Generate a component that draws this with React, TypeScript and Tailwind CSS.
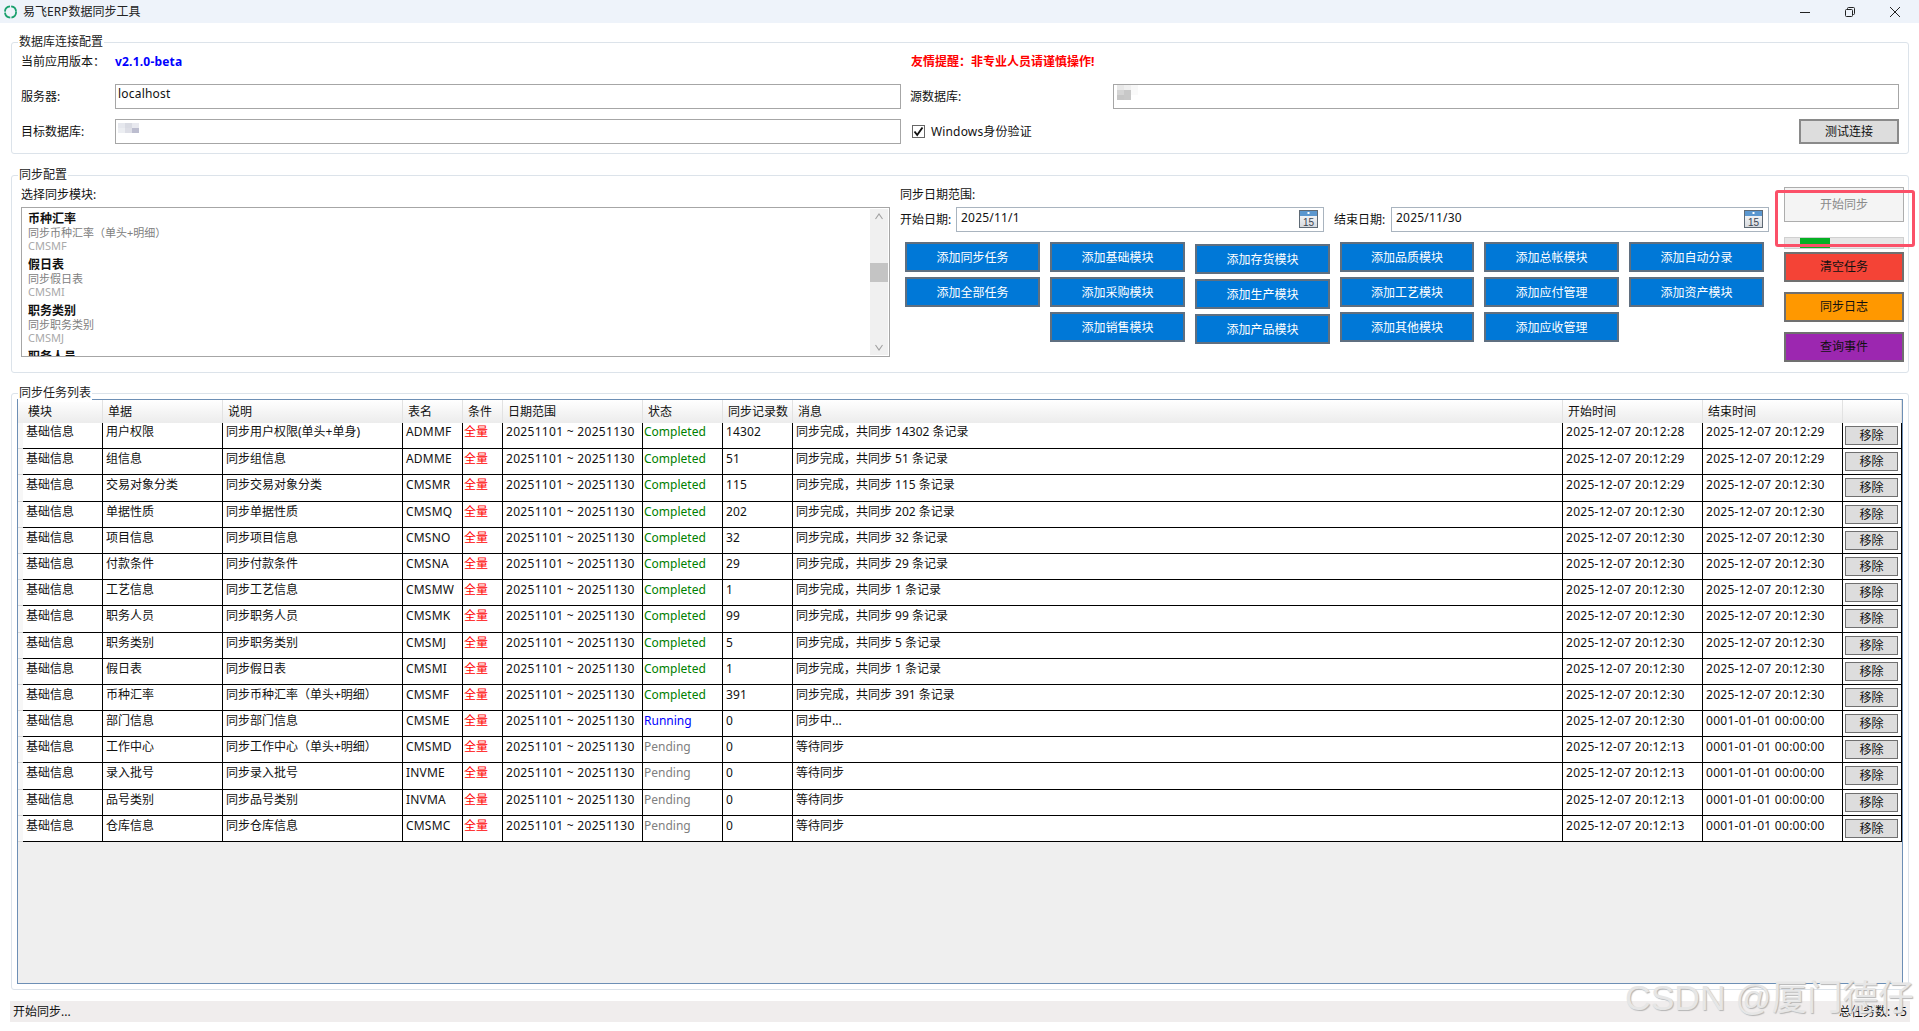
import React from 'react';

const font = "font-['Noto_Sans','Noto_Sans_CJK_SC',sans-serif]";

type Task = {
  bill: string;
  desc: string;
  table: string;
  status: string;
  count: string;
  msg: string;
  start: string;
  end: string;
};

const done = (bill: string, desc: string, table: string, count: string, start: string, end: string): Task => ({
  bill,
  desc,
  table,
  status: 'Completed',
  count,
  msg: `同步完成，共同步 ${count} 条记录`,
  start: `2025-12-07 20:12:${start}`,
  end: `2025-12-07 20:12:${end}`,
});

const pending = (bill: string, desc: string, table: string): Task => ({
  bill,
  desc,
  table,
  status: 'Pending',
  count: '0',
  msg: '等待同步',
  start: '2025-12-07 20:12:13',
  end: '0001-01-01 00:00:00',
});

const tasks: Task[] = [
  done('用户权限', '同步用户权限(单头+单身)', 'ADMMF', '14302', '28', '29'),
  done('组信息', '同步组信息', 'ADMME', '51', '29', '29'),
  done('交易对象分类', '同步交易对象分类', 'CMSMR', '115', '29', '30'),
  done('单据性质', '同步单据性质', 'CMSMQ', '202', '30', '30'),
  done('项目信息', '同步项目信息', 'CMSNO', '32', '30', '30'),
  done('付款条件', '同步付款条件', 'CMSNA', '29', '30', '30'),
  done('工艺信息', '同步工艺信息', 'CMSMW', '1', '30', '30'),
  done('职务人员', '同步职务人员', 'CMSMK', '99', '30', '30'),
  done('职务类别', '同步职务类别', 'CMSMJ', '5', '30', '30'),
  done('假日表', '同步假日表', 'CMSMI', '1', '30', '30'),
  done('币种汇率', '同步币种汇率（单头+明细）', 'CMSMF', '391', '30', '30'),
  {
    bill: '部门信息',
    desc: '同步部门信息',
    table: 'CMSME',
    status: 'Running',
    count: '0',
    msg: '同步中...',
    start: '2025-12-07 20:12:30',
    end: '0001-01-01 00:00:00',
  },
  pending('工作中心', '同步工作中心（单头+明细）', 'CMSMD'),
  pending('录入批号', '同步录入批号', 'INVME'),
  pending('品号类别', '同步品号类别', 'INVMA'),
  pending('仓库信息', '同步仓库信息', 'CMSMC'),
];

const modules = [
  { name: '币种汇率', desc: '同步币种汇率（单头+明细）', code: 'CMSMF' },
  { name: '假日表', desc: '同步假日表', code: 'CMSMI' },
  { name: '职务类别', desc: '同步职务类别', code: 'CMSMJ' },
];

const statusColor: Record<string, string> = {
  Completed: 'text-[#008000]',
  Running: 'text-[#0000ff]',
  Pending: 'text-[#808080]',
};

const headers = [
  { label: '模块', cls: 'w-[80px]' },
  { label: '单据', cls: 'w-[120px]' },
  { label: '说明', cls: 'w-[180px]' },
  { label: '表名', cls: 'w-[60px]' },
  { label: '条件', cls: 'w-[40px]' },
  { label: '日期范围', cls: 'w-[140px]' },
  { label: '状态', cls: 'w-[80px]' },
  { label: '同步记录数', cls: 'w-[70px]' },
  { label: '消息', cls: 'w-[770px]' },
  { label: '开始时间', cls: 'w-[140px]' },
  { label: '结束时间', cls: 'w-[140px]' },
  { label: '', cls: 'w-[59px]' },
];

// per-column tweaks for the task rows (latin columns run a bit wider in the original font)
const cellTweak = [
  'pl-[3px]',
  'pl-[3px]',
  'pl-[3px]',
  'pl-[3px] tracking-[0.2px]',
  'pl-[1px]',
  'pl-[3px] tracking-[0.3px]',
  'pl-[1px]',
  'pl-[3px] tracking-[0.15px]',
  'pl-[3px]',
  'pl-[3px] tracking-[0.28px]',
  'pl-[3px] tracking-[0.28px]',
];

const buttonCols = [
  { cls: '', width: 'w-[135px]', items: ['添加同步任务', '添加全部任务'] },
  { cls: '', width: 'w-[135px]', items: ['添加基础模块', '添加采购模块', '添加销售模块'] },
  { cls: 'mt-[2px]', width: 'w-[135px]', items: ['添加存货模块', '添加生产模块', '添加产品模块'] },
  { cls: '', width: 'w-[134px]', items: ['添加品质模块', '添加工艺模块', '添加其他模块'] },
  { cls: '', width: 'w-[135px]', items: ['添加总帐模块', '添加应付管理', '添加应收管理'] },
  { cls: '', width: 'w-[135px]', items: ['添加自动分录', '添加资产模块'] },
];

const Group: React.FC<{ title: string; className: string; children: React.ReactNode }> = ({ title, className, children }) => (
  <section className={`relative ml-[11px] w-[1898px] rounded-[3px] border border-[#dce3ea] ${className}`}>
    <span className="absolute -top-[10px] left-[6px] bg-white px-[1px] leading-[18px] text-[#222]">{title}</span>
    {children}
  </section>
);

const CalendarIcon = () => (
  <svg width="19" height="18" viewBox="0 0 19 18" className="shrink-0">
    <defs>
      <linearGradient id="calBody" x1="0" y1="0" x2="0" y2="1">
        <stop offset="0" stopColor="#ffffff" />
        <stop offset="1" stopColor="#d5d9de" />
      </linearGradient>
    </defs>
    <rect x="0.5" y="0.5" width="18" height="17" fill="url(#calBody)" stroke="#5f6a75" />
    <rect x="1" y="1" width="17" height="5" fill="#5b97cf" />
    <rect x="8.5" y="2" width="2" height="2" fill="#fff" />
    <text x="9.5" y="15.5" textAnchor="middle" fontSize="10" fontFamily="Liberation Sans" fill="#3b4450">15</text>
  </svg>
);

// the blurred-out database names
const Blur: React.FC<{ rows: string[][] }> = ({ rows }) => (
  <div className="flex flex-col blur-[0.6px]">
    {rows.map((row, r) => (
      <div key={r} className="flex">
        {row.map((c, i) => (
          <div key={i} className="h-[5px] w-[7px]" style={{ background: c }} />
        ))}
      </div>
    ))}
  </div>
);

const DateField: React.FC<{ value: string; className: string }> = ({ value, className }) => (
  <div className={`flex h-[25px] items-start justify-between border border-[#a9b4bf] pl-[4px] pr-[5px] pt-[1px] ${className}`}>
    <span className="leading-[18px] tracking-[0.2px]">{value}</span>
    <div className="pt-[1px]">
      <CalendarIcon />
    </div>
  </div>
);

export default function App() {
  return (
    <div className={`${font} relative flex h-[1031px] w-[1919px] flex-col overflow-hidden bg-white text-[12px] text-[#111]`}>
      {/* title bar */}
      <header className="flex h-[23px] shrink-0 items-center bg-[#eef3fa] pl-[3px]">
        <svg width="15" height="16" viewBox="0 0 15 16" className="shrink-0">
          <circle cx="7.5" cy="8" r="5.6" fill="none" stroke="#1aa06d" strokeWidth="1.8" strokeDasharray="7.6 1.2" />
        </svg>
        <span className="ml-[5px] text-[12px] leading-none text-[#222]">易飞ERP数据同步工具</span>
        <div className="ml-auto mr-[19px] flex items-center gap-[35px]">
          <svg width="10" height="10" viewBox="0 0 10 10" stroke="#222" strokeWidth="1">
            <path d="M0 5.5h10" />
          </svg>
          <svg width="10" height="10" viewBox="0 0 10 10" fill="none" stroke="#222" strokeWidth="1">
            <rect x="0.5" y="2.5" width="7" height="7" rx="1" />
            <path d="M2.5 2.5V1.5a1 1 0 0 1 1-1h5a1 1 0 0 1 1 1v5a1 1 0 0 1-1 1H7.5" />
          </svg>
          <svg width="10" height="10" viewBox="0 0 10 10" stroke="#222" strokeWidth="1">
            <path d="M0 0L10 10M10 0L0 10" />
          </svg>
        </div>
      </header>

      <Group title="数据库连接配置" className="mt-[19px] h-[112px] shrink-0">
        <div className="grid grid-cols-[94px_786px_212px_786px] grid-rows-[23px_25px_25px] items-center gap-y-[10px] pl-[9px] pt-[8px]">
          <span className="self-start leading-[22px]">当前应用版本：</span>
          <span className="self-start font-bold leading-[22px] tracking-[0.2px] text-[#0000ff]">v2.1.0-beta</span>
          <span className="col-span-2 self-start pl-[10px] font-bold leading-[22px] text-[#ff0000]">友情提醒：非专业人员请谨慎操作!</span>

          <span className="pt-[1px]">服务器:</span>
          <div className="h-[25px] border border-[#a6a6a6] pl-[2px] leading-[18px] tracking-[0.2px]">localhost</div>
          <span className="pl-[9px] pt-[1px]">源数据库:</span>
          <div className="h-[25px] border border-[#a6a6a6] pl-[3px]">
            <Blur
              rows={[
                ['#e8e8e8', '#f0f0f0', '#f8f8f8'],
                ['#d4d4d4', '#c8c8c8', '#fafafa'],
                ['#c6c6c6', '#c8c8c8', '#ffffff'],
              ]}
            />
          </div>

          <span>目标数据库:</span>
          <div className="h-[25px] border border-[#a6a6a6] pl-[2px] pt-[3px]">
            <Blur
              rows={[
                ['#e6e8ee', '#d9dbe3', '#e8e9ef'],
                ['#eceef2', '#dddee6', '#bcbdcf'],
              ]}
            />
          </div>
          <label className="flex items-center pl-[11px]">
            <span className="flex h-[13px] w-[13px] items-center justify-center border border-[#666]">
              <svg width="11" height="11" viewBox="0 0 11 11">
                <path d="M1.5 5.5 L4.2 9 L9.5 1.5" fill="none" stroke="#111" strokeWidth="1.9" />
              </svg>
            </span>
            <span className="ml-[6px] tracking-[0.15px]">Windows身份验证</span>
          </label>
          <div className="flex justify-end">
            <button className="h-[25px] w-[100px] border-2 border-[#8a8a8a] bg-[#dddddd]">测试连接</button>
          </div>
        </div>
      </Group>

      <Group title="同步配置" className="mt-[21px] h-[198px] shrink-0">
        <div className="flex pl-[9px] pt-[9px]">
          <div className="w-[869px] shrink-0">
            <div className="h-[22px] leading-[20px]">选择同步模块:</div>
            <div className="flex h-[150px] justify-between overflow-hidden border border-[#a6a6a6] pl-[6px]">
              <div className="pt-[3px]">
                {modules.map((m) => (
                  <div key={m.code} className="h-[46px]">
                    <div className="h-[15px] font-bold leading-[16px]">{m.name}</div>
                    <div className="h-[13px] text-[11px] leading-[14px] text-[#808080]">{m.desc}</div>
                    <div className="h-[13px] text-[11px] leading-[13px] text-[#a9a9a9]">{m.code}</div>
                  </div>
                ))}
                <div className="font-bold leading-[16px]">职务人员</div>
              </div>
              <div className="my-[1px] mr-[1px] flex w-[18px] flex-col items-center justify-between bg-[#f0f0f0]">
                <svg width="10" height="16" viewBox="0 0 10 16" fill="none" stroke="#a0a0a0" strokeWidth="1.1" className="shrink-0">
                  <path d="M1.5 10 L5 5 L8.5 10" />
                </svg>
                <div className="-mt-[20px] h-[19px] w-full bg-[#c4c4c4]" />
                <svg width="10" height="16" viewBox="0 0 10 16" fill="none" stroke="#a0a0a0" strokeWidth="1.1" className="shrink-0">
                  <path d="M1.5 6 L5 11 L8.5 6" />
                </svg>
              </div>
            </div>
          </div>

          <div className="ml-[10px] w-[869px] shrink-0">
            <div className="h-[22px] leading-[20px]">同步日期范围:</div>
            <div className="flex items-center">
              <span className="w-[56px]">开始日期:</span>
              <DateField value="2025/11/1" className="w-[368px]" />
              <span className="ml-[10px] w-[57px]">结束日期:</span>
              <DateField value="2025/11/30" className="w-[378px]" />
            </div>
            <div className="ml-[5px] mt-[10px] flex gap-[10px]">
              {buttonCols.map((col, i) => (
                <div key={i} className={`flex flex-col gap-[5px] ${col.cls}`}>
                  {col.items.map((b) => (
                    <button key={b} className={`h-[30px] ${col.width} border-2 border-[#5f6f80] bg-[#0078d7] pt-[1px] text-white`}>
                      {b}
                    </button>
                  ))}
                </div>
              ))}
            </div>
          </div>

          <div className="relative ml-[15px] mt-[2px] flex w-[120px] shrink-0 flex-col">
            <button className="h-[35px] border border-[#adadad] bg-[#f4f4f4] text-[#8a8a8a]">开始同步</button>
            <div className="mt-[15px] h-[12px] border border-[#d0d0d0] bg-[#e6e6e6] pl-[15px]">
              <div className="h-full w-[30px] bg-[#06b025]" />
            </div>
            <button className="mt-[3px] h-[30px] border-2 border-[#707070] bg-[#f44336]">清空任务</button>
            <button className="mt-[10px] h-[30px] border-2 border-[#707070] bg-[#ff9800]">同步日志</button>
            <button className="mt-[10px] h-[30px] border-2 border-[#707070] bg-[#9c27b0]">查询事件</button>
            {/* annotation from the screenshot */}
            <div className="pointer-events-none absolute -left-[9px] top-[3px] h-[57px] w-[140px] rounded-[3px] border-[3px] border-[#fb5068]" />
          </div>
        </div>
      </Group>

      <Group title="同步任务列表" className="mt-[20px] h-[597px] shrink-0">
        <div className="ml-[5px] mt-[5px] h-[585px] w-[1886px] overflow-hidden border border-[#6d8fb5] bg-[#efefef]">
          <div className="flex h-[23px] bg-gradient-to-b from-white to-[#ececec] pl-[5px]">
            {headers.map((h, i) => (
              <div key={i} className={`${h.cls} shrink-0 overflow-hidden whitespace-nowrap border-r border-[#e2e2e2] pl-[5px] leading-[23px]`}>
                {h.label}
              </div>
            ))}
          </div>
          {tasks.map((t, row) => (
            <div key={t.bill} className="flex h-[26.2px] bg-white">
              <div className="w-[5px] shrink-0 border-b border-[#d8d8d8] bg-[#f7f7f7]" />
              {[
                '基础信息',
                t.bill,
                t.desc,
                t.table,
                null,
                '20251101 ~ 20251130',
                t.status,
                t.count,
                t.msg,
                t.start,
                t.end,
              ].map((text, i) => (
                <div
                  key={i}
                  className={`${headers[i].cls} shrink-0 overflow-hidden whitespace-nowrap border-b border-r border-black ${row === 0 ? 'leading-[18px]' : 'leading-[19px]'} ${cellTweak[i]} ${i === 6 ? statusColor[t.status] : ''}`}
                >
                  {text === null ? <span className="text-[#ff0000]">全量</span> : text}
                </div>
              ))}
              <div className="w-[59px] shrink-0 border-b border-r border-black pl-[2px] pt-[3px]">
                <button className="h-[19px] w-[53px] border border-[#707070] bg-[#dddddd] leading-[17px]">移除</button>
              </div>
            </div>
          ))}
        </div>
      </Group>

      <footer className="ml-[10px] mt-[11px] flex h-[21px] w-[1900px] shrink-0 items-center justify-between bg-[#f0eded] px-[3px]">
        <span>开始同步...</span>
        <span>总任务数: 15</span>
      </footer>

      {/* blog watermark over the screenshot */}
      <div className="pointer-events-none absolute left-[1625px] top-[976px] whitespace-nowrap font-['Liberation_Sans','Noto_Sans_CJK_SC',sans-serif] text-[35.5px] leading-[44px] text-[#e6e6e6] [text-shadow:1px_1px_1px_#b5b5b5]">
        CSDN @厦门德仔
      </div>
    </div>
  );
}
